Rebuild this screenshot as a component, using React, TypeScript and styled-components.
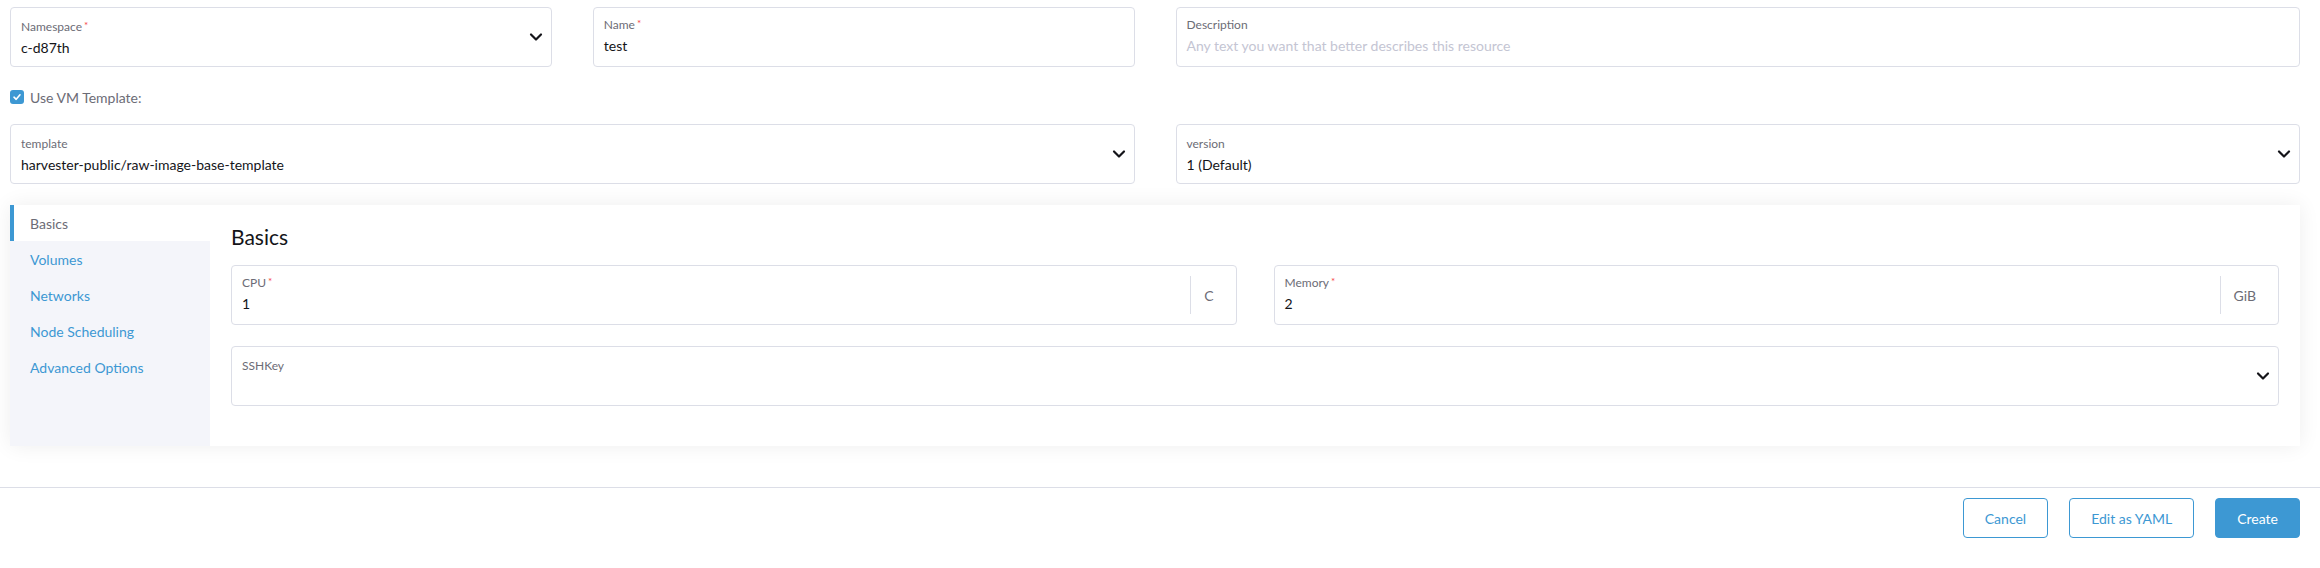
import React from "react";
import styled, { createGlobalStyle } from "styled-components";

const GlobalStyle = createGlobalStyle`
  html, body {
    margin: 0;
    padding: 0;
    background: #fff;
    font-family: Lato, "Open Sans", sans-serif;
  }
  * { box-sizing: border-box; }
`;

const Page = styled.div`
  padding: 7px 20px 0 10px;
`;

const Halves = styled.div`
  display: grid;
  grid-template-columns: 1fr 1fr;
  gap: 41px;
`;

const Field = styled.div`
  display: flex;
  align-items: center;
  height: 60px;
  border: 1px solid #dcdee7;
  border-radius: 4px;
  background: #fff;
`;

const FieldBody = styled.div<{ $select?: boolean }>`
  flex: 1;
  align-self: stretch;
  padding: ${(p) => (p.$select ? "10px" : "8px")} 10px 0;
  min-width: 0;
`;

const Label = styled.div`
  font-size: 12px;
  line-height: 18px;
  color: #6c6c76;
`;

const Req = styled.span`
  color: #f64747;
  font-size: 10px;
  vertical-align: top;
  margin-left: 2px;
  line-height: 14px;
`;

const Value = styled.div<{ $placeholder?: boolean }>`
  font-size: 14px;
  line-height: 24px;
  color: ${(p) => (p.$placeholder ? "#c4c5d3" : "#141419")};
  white-space: nowrap;
`;

const Caret = styled.svg`
  flex-shrink: 0;
  margin-right: 8px;
`;

const Suffix = styled.div`
  align-self: stretch;
  display: flex;
  align-items: center;
  margin: 10px 0;
  padding: 0 22px 0 13px;
  border-left: 1px solid #dcdee7;
  font-size: 14px;
  color: #6c6c76;
`;

const CheckRow = styled.label`
  display: flex;
  align-items: center;
  gap: 6px;
  height: 20px;
  margin: 20px 0 17px;
  font-size: 14px;
  color: #6c6c76;
`;

const CheckBox = styled.span`
  width: 14px;
  height: 14px;
  border-radius: 3px;
  background: #3d98d3;
  display: flex;
  align-items: center;
  justify-content: center;
`;

const Panel = styled.div`
  display: flex;
  margin-top: 21px;
  background: #fff;
  box-shadow: 0 0 20px rgba(0, 0, 0, 0.07);
`;

const SideNav = styled.div`
  width: 200px;
  flex-shrink: 0;
  background: #f4f5fa;
`;

const NavItem = styled.div<{ $active?: boolean }>`
  height: 36px;
  display: flex;
  align-items: center;
  padding-left: ${(p) => (p.$active ? "16px" : "20px")};
  border-left: ${(p) => (p.$active ? "4px solid #3d98d3" : "none")};
  background: ${(p) => (p.$active ? "#fff" : "transparent")};
  color: ${(p) => (p.$active ? "#6c6c76" : "#3d98d3")};
  font-size: 14px;
  cursor: pointer;
`;

const Content = styled.div`
  flex: 1;
  padding: 20px 21px 40px;
`;

const Heading = styled.h3`
  margin: 0 0 16px;
  font-size: 21px;
  line-height: 24px;
  font-weight: 400;
  color: #141419;
`;

const Pair = styled.div`
  display: grid;
  grid-template-columns: 1fr 1fr;
  gap: 37px;
  margin-bottom: 21px;
`;

const Footer = styled.div`
  margin-top: 41px;
  border-top: 1px solid #dcdee7;
  padding: 10px 20px 0 0;
  display: flex;
  justify-content: flex-end;
  gap: 21px;
`;

const Button = styled.button<{ $primary?: boolean }>`
  height: 40px;
  padding: 0 21px;
  border-radius: 4px;
  border: 1px solid #3d98d3;
  background: ${(p) => (p.$primary ? "#3d98d3" : "#fff")};
  color: ${(p) => (p.$primary ? "#fff" : "#3d98d3")};
  font-family: Lato, sans-serif;
  font-size: 14px;
  cursor: pointer;
`;

const Chevron = () => (
  <Caret width="14" height="14" viewBox="0 0 14 14" fill="none">
    <path d="M2 4.5L7 9.5L12 4.5" stroke="#141419" strokeWidth="2.2" strokeLinecap="round" strokeLinejoin="round" />
  </Caret>
);

type FieldProps = {
  label: string;
  value?: string;
  placeholder?: string;
  required?: boolean;
  select?: boolean;
  suffix?: string;
};

const FormField = ({ label, value, placeholder, required, select, suffix }: FieldProps) => (
  <Field>
    <FieldBody $select={select}>
      <Label>
        {label}
        {required && <Req>*</Req>}
      </Label>
      <Value $placeholder={!value && !!placeholder}>{value || placeholder || "\u00a0"}</Value>
    </FieldBody>
    {suffix && <Suffix>{suffix}</Suffix>}
    {select && <Chevron />}
  </Field>
);

const tabs = ["Basics", "Volumes", "Networks", "Node Scheduling", "Advanced Options"];

export default function App() {
  return (
    <>
      <GlobalStyle />
      <Page>
        <Halves>
          <Halves>
            <FormField label="Namespace" value="c-d87th" required select />
            <FormField label="Name" value="test" required />
          </Halves>
          <FormField label="Description" placeholder="Any text you want that better describes this resource" />
        </Halves>

        <CheckRow>
          <CheckBox>
            <svg width="10" height="10" viewBox="0 0 10 10" fill="none">
              <path d="M2 5.2L4.2 7.3L8 2.8" stroke="#fff" strokeWidth="1.6" strokeLinecap="round" strokeLinejoin="round" />
            </svg>
          </CheckBox>
          Use VM Template:
        </CheckRow>

        <Halves>
          <FormField label="template" value="harvester-public/raw-image-base-template" select />
          <FormField label="version" value="1 (Default)" select />
        </Halves>

        <Panel>
          <SideNav>
            {tabs.map((t, i) => (
              <NavItem key={t} $active={i === 0}>
                {t}
              </NavItem>
            ))}
          </SideNav>
          <Content>
            <Heading>Basics</Heading>
            <Pair>
              <FormField label="CPU" value="1" required suffix="C" />
              <FormField label="Memory" value="2" required suffix="GiB" />
            </Pair>
            <FormField label="SSHKey" select />
          </Content>
        </Panel>
      </Page>
      <Footer>
        <Button>Cancel</Button>
        <Button>Edit as YAML</Button>
        <Button $primary>Create</Button>
      </Footer>
    </>
  );
}
